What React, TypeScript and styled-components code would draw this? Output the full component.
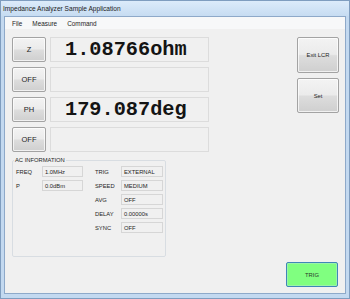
import React from 'react';
import styled, { createGlobalStyle } from 'styled-components';

const GlobalStyle = createGlobalStyle`
  html, body {
    margin: 0;
    padding: 0;
    background: #ffffff;
  }
  body {
    font-family: "Liberation Sans", Arial, sans-serif;
  }
`;

const Window = styled.div`
  width: 350px;
  height: 299px;
  box-sizing: border-box;
  border: 1px solid #7f9dbf;
  background: #c3d9f0;
  padding: 0 3px 4px 3px;
  display: flex;
  flex-direction: column;
`;

const TitleBar = styled.div`
  height: 15px;
  display: flex;
  align-items: center;
  padding-left: 2px;
  margin: 0 -3px;
  background: linear-gradient(#dcebfa, #c6dcf2);
  font-size: 6.6px;
  color: #1c1c1c;
`;

const Client = styled.div`
  flex: 1;
  display: flex;
  flex-direction: column;
  border: 1px solid #8ea9c9;
  background: #f0f0f0;
  min-height: 0;
`;

const MenuBar = styled.div`
  height: 12px;
  display: flex;
  align-items: center;
  padding-left: 2px;
  background: #f7f8f9;
`;

const MenuItem = styled.span`
  padding: 0 5px;
  font-size: 6.4px;
  color: #1e1e1e;
`;

const Content = styled.div`
  flex: 1;
  display: flex;
  justify-content: space-between;
  padding: 8px 6px 6px 7px;
`;

const LeftPanel = styled.div`
  display: flex;
  flex-direction: column;
`;

const Rows = styled.div`
  display: flex;
  flex-direction: column;
  gap: 5px;
`;

const Row = styled.div`
  display: flex;
  gap: 4px;
`;

const Button = styled.button<{ $w: number; $h: number; $fs?: number }>`
  width: ${(p) => p.$w}px;
  height: ${(p) => p.$h}px;
  box-sizing: border-box;
  padding: 0;
  margin: 0;
  border: 1px solid #a3a3a3;
  border-radius: 2px;
  background: linear-gradient(#f3f3f3 0%, #ebebeb 48%, #dddddd 52%, #cfcfcf 100%);
  box-shadow: inset 0 0 0 1px rgba(255, 255, 255, 0.7);
  font-family: "Liberation Sans", Arial, sans-serif;
  font-size: ${(p) => p.$fs ?? 5.8}px;
  color: #1e1e1e;
`;

const TrigButton = styled(Button)`
  margin-right: 1px;
  border-color: #3f86b8;
  background: #80ff80;
  box-shadow: inset 0 0 0 1px #9bf3a8;
  color: #2a3a2a;
`;

const Display = styled.div`
  width: 159px;
  height: 25px;
  box-sizing: border-box;
  border: 1px solid #dcdcdc;
  display: flex;
  align-items: center;
  padding-left: 14px;
  font-family: "Liberation Mono", "DejaVu Sans Mono", monospace;
  font-weight: bold;
  font-size: 20.3px;
  color: #141414;
`;

const GroupBox = styled.fieldset`
  margin: 5px 0 0 0;
  width: 154px;
  height: 100px;
  box-sizing: border-box;
  border: 1px solid #d8dde2;
  border-radius: 2px;
  padding: 2px 1px 0 3px;
`;

const GroupLabel = styled.legend`
  padding: 0 1px;
  margin-left: -2px;
  font-size: 5.8px;
  line-height: 7px;
  color: #1e1e1e;
`;

const InfoGrid = styled.div`
  display: flex;
  gap: 12px;
`;

const InfoColumn = styled.div`
  display: flex;
  flex-direction: column;
  gap: 3px;
`;

const InfoRow = styled.div<{ $box: number }>`
  display: grid;
  grid-template-columns: 26px ${(p) => p.$box}px;
  align-items: center;
  font-size: 5.8px;
  color: #1e1e1e;
`;

const InfoValue = styled.div`
  height: 11px;
  box-sizing: border-box;
  border: 1px solid #d6d6d6;
  display: flex;
  align-items: center;
  padding-left: 2px;
`;

const RightPanel = styled.div`
  display: flex;
  flex-direction: column;
  align-items: flex-end;
  gap: 5px;
`;

const Spacer = styled.div`
  flex: 1;
`;

const rows = [
  { key: 'Z', value: '1.08766ohm' },
  { key: 'OFF', value: '' },
  { key: 'PH', value: '179.087deg' },
  { key: 'OFF', value: '' },
];

const leftInfo = [
  ['FREQ', '1.0MHz'],
  ['P', '0.0dBm'],
];

const rightInfo = [
  ['TRIG', 'EXTERNAL'],
  ['SPEED', 'MEDIUM'],
  ['AVG', 'OFF'],
  ['DELAY', '0.00000s'],
  ['SYNC', 'OFF'],
];

const App: React.FC = () => {
  return (
    <>
      <GlobalStyle />
      <Window>
        <TitleBar>Impedance Analyzer Sample Application</TitleBar>
        <Client>
          <MenuBar>
            <MenuItem>File</MenuItem>
            <MenuItem>Measure</MenuItem>
            <MenuItem>Command</MenuItem>
          </MenuBar>
          <Content>
            <LeftPanel>
              <Rows>
                {rows.map((r, i) => (
                  <Row key={i}>
                    <Button $w={34} $h={25} $fs={7.5}>{r.key}</Button>
                    <Display>{r.value}</Display>
                  </Row>
                ))}
              </Rows>
              <GroupBox>
                <GroupLabel>AC INFORMATION</GroupLabel>
                <InfoGrid>
                  <InfoColumn>
                    {leftInfo.map(([k, v]) => (
                      <InfoRow key={k} $box={41}>
                        <span>{k}</span>
                        <InfoValue>{v}</InfoValue>
                      </InfoRow>
                    ))}
                  </InfoColumn>
                  <InfoColumn>
                    {rightInfo.map(([k, v]) => (
                      <InfoRow key={k} $box={42}>
                        <span>{k}</span>
                        <InfoValue>{v}</InfoValue>
                      </InfoRow>
                    ))}
                  </InfoColumn>
                </InfoGrid>
              </GroupBox>
            </LeftPanel>
            <RightPanel>
              <Button $w={42} $h={36}>Exit LCR</Button>
              <Button $w={42} $h={35}>Set</Button>
              <Spacer />
              <TrigButton $w={52} $h={25}>TRIG</TrigButton>
            </RightPanel>
          </Content>
        </Client>
      </Window>
    </>
  );
};

export default App;
